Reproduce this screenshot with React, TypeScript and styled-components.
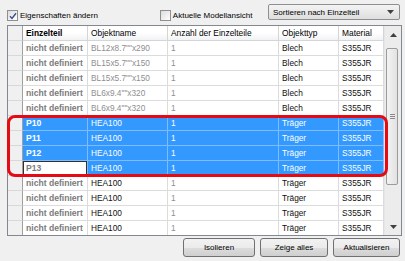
import React from "react";
import styled, { createGlobalStyle, css } from "styled-components";

interface IRow {
  part: string;
  name: string;
  count: string;
  type: string;
  material: string;
  nameDark?: boolean;
  selected?: boolean;
  focused?: boolean;
}

const rows: IRow[] = [
  { part: "nicht definiert", name: 'BL12x8.7""x290', count: "1", type: "Blech", material: "S355JR" },
  { part: "nicht definiert", name: 'BL15x5.7""x150', count: "1", type: "Blech", material: "S355JR" },
  { part: "nicht definiert", name: 'BL15x5.7""x150', count: "1", type: "Blech", material: "S355JR" },
  { part: "nicht definiert", name: 'BL6x9.4""x320', count: "1", type: "Blech", material: "S355JR" },
  { part: "nicht definiert", name: 'BL6x9.4""x320', count: "1", type: "Blech", material: "S355JR" },
  { part: "P10", name: "HEA100", count: "1", type: "Träger", material: "S355JR", selected: true },
  { part: "P11", name: "HEA100", count: "1", type: "Träger", material: "S355JR", selected: true },
  { part: "P12", name: "HEA100", count: "1", type: "Träger", material: "S355JR", selected: true },
  { part: "P13", name: "HEA100", count: "1", type: "Träger", material: "S355JR", selected: true, focused: true },
  { part: "nicht definiert", name: "HEA100", count: "1", type: "Träger", material: "S355JR", nameDark: true },
  { part: "nicht definiert", name: "HEA100", count: "1", type: "Träger", material: "S355JR", nameDark: true },
  { part: "nicht definiert", name: "HEA100", count: "1", type: "Träger", material: "S355JR", nameDark: true },
  { part: "nicht definiert", name: "HEA100", count: "1", type: "Träger", material: "S355JR", nameDark: true },
];

const GlobalStyle = createGlobalStyle`
  html, body {
    margin: 0;
    padding: 0;
    background: #f0f0f0;
  }
`;

const Page = styled.div`
  width: 405px;
  height: 261px;
  background: #f0f0f0;
  font-family: "Liberation Sans", Arial, sans-serif;
  font-size: 8px;
  color: #000;
  overflow: hidden;
`;

const TopBar = styled.div`
  height: 25px;
  display: flex;
  align-items: flex-start;
  padding: 4px 5px 0 7px;
  box-sizing: border-box;
`;

const CheckLabel = styled.label<{ $offset?: number }>`
  display: flex;
  align-items: center;
  gap: 2px;
  margin-top: 6px;
  margin-left: ${(p) => p.$offset || 0}px;
  font-size: 8px;
  white-space: nowrap;
`;

const Box = styled.span`
  width: 9px;
  height: 9px;
  border: 1px solid #8e8f8f;
  background: linear-gradient(135deg, #dcdcdc 0%, #ffffff 100%);
  display: flex;
  align-items: center;
  justify-content: center;
`;

const Combo = styled.div`
  margin-left: auto;
  width: 121px;
  height: 14px;
  border: 1px solid #8e8f8f;
  border-radius: 2px;
  background: linear-gradient(#f4f4f4, #dedede);
  display: flex;
  align-items: center;
  padding: 0 5px 0 4px;
  font-size: 8px;
  box-sizing: content-box;
`;

const ComboText = styled.span`
  flex: 1;
`;

const GridArea = styled.div`
  position: relative;
  margin-left: 7px;
  width: 395px;
`;

const Frame = styled.div`
  height: 211px;
  border: 1px solid #828790;
  box-sizing: border-box;
  background: #fff;
  display: flex;
  overflow: hidden;
`;

const Table = styled.div`
  display: grid;
  grid-template-columns: 15px 65px 80px 111px 60px 45px;
  grid-auto-rows: 15px;
  align-content: start;
`;

const HeadCell = styled.div<{ $bold?: boolean }>`
  background: linear-gradient(#ffffff 0%, #ffffff 50%, #f1f2f4 100%);
  border-right: 1px solid #d5d5d5;
  border-bottom: 1px solid #d5d5d5;
  padding-left: 3px;
  display: flex;
  align-items: center;
  font-size: 8.4px;
  font-weight: ${(p) => (p.$bold ? 700 : 400)};
  white-space: nowrap;
  overflow: hidden;
`;

const RowHead = styled.div`
  background: #f0f0f0;
  border-right: 1px solid #a0a0a0;
  border-bottom: 1px solid #d8d8d8;
`;

const Cell = styled.div<{ $sel?: boolean; $focus?: boolean; $tone?: "dark" | "gray" | "light"; $bold?: boolean }>`
  display: flex;
  align-items: center;
  padding-left: 3px;
  white-space: nowrap;
  overflow: hidden;
  font-size: ${(p) => (p.$bold ? 8.6 : 8.3)}px;
  font-weight: ${(p) => (p.$bold ? 700 : 400)};
  border-right: 1px solid #dcdcdc;
  border-bottom: 1px solid #dcdcdc;
  background: #fff;
  color: ${(p) => (p.$tone === "dark" ? "#111" : p.$tone === "light" ? "#8e8e8e" : "#7b7b7b")};
  ${(p) =>
    p.$sel &&
    css`
      background: #3399ff;
      color: #fff;
      border-right-color: #7dbdff;
      border-bottom-color: #7dbdff;
    `}
  ${(p) =>
    p.$focus &&
    css`
      background: #fff;
      color: #7b7b7b;
      box-shadow: inset 0 0 0 1px #303030;
    `}
`;

const ScrollBar = styled.div`
  width: 17px;
  display: flex;
  flex-direction: column;
  background: #ececec;
  border-left: 1px solid #e6e6e6;
  box-sizing: border-box;
`;

const ArrowBtn = styled.div`
  height: 17px;
  display: flex;
  align-items: center;
  justify-content: center;
`;

const Track = styled.div`
  flex: 1;
  padding-top: 5px;
`;

const Thumb = styled.div`
  width: 12px;
  height: 137px;
  margin-left: 1px;
  border: 1px solid #9b9b9b;
  border-radius: 2px;
  background: linear-gradient(90deg, #f3f3f3, #e2e2e2);
  box-sizing: border-box;
  display: flex;
  align-items: center;
  justify-content: center;
`;

const Grip = styled.div`
  width: 5px;
  height: 6px;
  background: repeating-linear-gradient(#8a8a8a 0 1px, transparent 1px 2px);
`;

const Highlight = styled.div`
  position: absolute;
  left: 0;
  top: 90px;
  width: 381px;
  height: 62px;
  border: 3px solid #e60a14;
  border-radius: 8px;
  box-sizing: border-box;
  pointer-events: none;
`;

const ButtonBar = styled.div`
  display: flex;
  justify-content: flex-end;
  gap: 5px;
  padding-right: 5px;
  margin-top: 2px;
`;

const Button = styled.button<{ $w: number }>`
  width: ${(p) => p.$w}px;
  height: 19px;
  border: 1px solid #707070;
  border-radius: 3px;
  background: linear-gradient(#f2f2f2 0%, #ebebeb 50%, #dddddd 51%, #cfcfcf 100%);
  font-family: "Liberation Sans", Arial, sans-serif;
  font-size: 8px;
  color: #000;
  padding: 0;
`;

const Check = () => (
  <svg width="8" height="8" viewBox="0 0 8 8">
    <path d="M1 4.2 L3 6.4 L7 1.2" fill="none" stroke="#3b4f8a" strokeWidth="1.4" />
  </svg>
);

const Tri = ({ up }: { up?: boolean }) => (
  <svg width="7" height="4" viewBox="0 0 7 4">
    <path d={up ? "M0 4 L3.5 0 L7 4 Z" : "M0 0 L3.5 4 L7 0 Z"} fill="#404040" />
  </svg>
);

const App: React.FC = () => {
  return (
    <Page>
      <GlobalStyle />
      <TopBar>
        <CheckLabel>
          <Box>
            <Check />
          </Box>
          Eigenschaften ändern
        </CheckLabel>
        <CheckLabel $offset={62}>
          <Box />
          Aktuelle Modellansicht
        </CheckLabel>
        <Combo>
          <ComboText>Sortieren nach Einzelteil</ComboText>
          <Tri />
        </Combo>
      </TopBar>
      <GridArea>
        <Frame>
          <Table>
            <RowHead />
            <HeadCell $bold>Einzelteil</HeadCell>
            <HeadCell>Objektname</HeadCell>
            <HeadCell>Anzahl der Einzelteile</HeadCell>
            <HeadCell>Objekttyp</HeadCell>
            <HeadCell>Material</HeadCell>
            {rows.map((r, i) => (
              <React.Fragment key={i}>
                <RowHead />
                <Cell $bold $sel={r.selected} $focus={r.focused}>
                  {r.part}
                </Cell>
                <Cell $sel={r.selected} $tone={r.nameDark ? "dark" : "light"}>
                  {r.name}
                </Cell>
                <Cell $sel={r.selected} $tone="light">
                  {r.count}
                </Cell>
                <Cell $sel={r.selected} $tone="dark">
                  {r.type}
                </Cell>
                <Cell $sel={r.selected} $tone="dark">
                  {r.material}
                </Cell>
              </React.Fragment>
            ))}
          </Table>
          <ScrollBar>
            <ArrowBtn>
              <Tri up />
            </ArrowBtn>
            <Track>
              <Thumb>
                <Grip />
              </Thumb>
            </Track>
            <ArrowBtn>
              <Tri />
            </ArrowBtn>
          </ScrollBar>
        </Frame>
        <Highlight />
      </GridArea>
      <ButtonBar>
        <Button $w={72}>Isolieren</Button>
        <Button $w={68}>Zeige alles</Button>
        <Button $w={67}>Aktualisieren</Button>
      </ButtonBar>
    </Page>
  );
};

export default App;
